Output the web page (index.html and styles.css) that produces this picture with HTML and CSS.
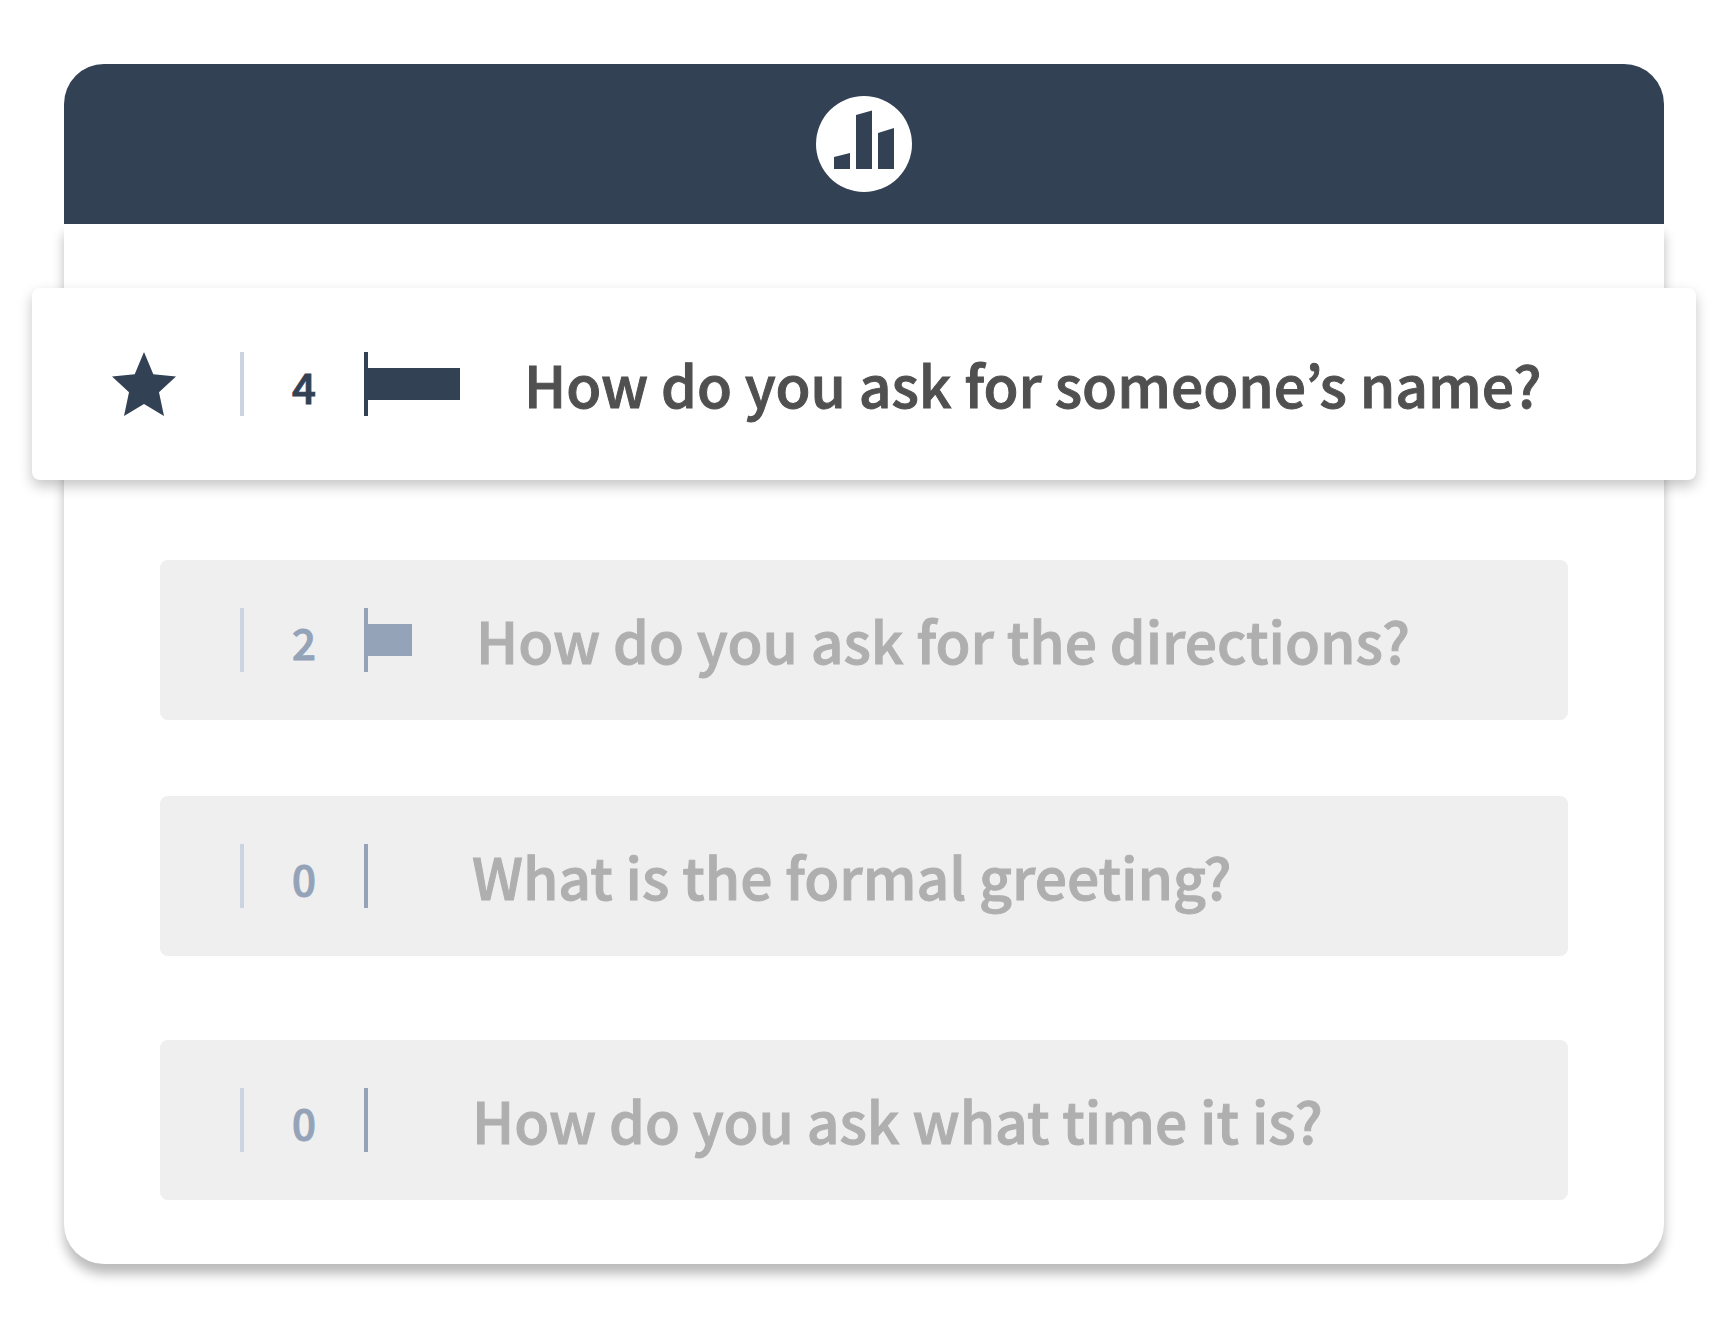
FILE: index.html
```html
<!DOCTYPE html>
<html lang="en">
<head>
  <meta charset="UTF-8">
  <meta name="viewport" content="width=device-width, initial-scale=1">
  <title>Questions</title>
  <link rel="stylesheet" href="styles.css">
</head>
<body>
  <main class="card">
    <header class="card-header">
      <svg class="logo" viewBox="0 0 96 96" aria-hidden="true">
        <circle cx="48" cy="48" r="48" fill="#fff"/>
        <path d="M18 61L34 57V73H18ZM40 19L56 14.5V73H40ZM62 37L78 32V73H62Z" fill="#334155"/>
      </svg>
    </header>

    <ol class="questions">
      <li class="question featured">
        <svg class="star" viewBox="0 0 64 64" aria-hidden="true">
          <path d="M32 0L41.3 22.3L64 24.6L47 40.3L52 64L32 52L12 64L17 40.3L0 24.6L22.7 22.3Z"/>
        </svg>
        <span class="votes">4</span>
        <span class="flag"><span class="bar" style="width: 92px"></span></span>
        <span class="text">How do you ask for someone’s name?</span>
      </li>
      <li class="question">
        <span class="votes">2</span>
        <span class="flag"><span class="bar" style="width: 44px"></span></span>
        <span class="text">How do you ask for the directions?</span>
      </li>
      <li class="question">
        <span class="votes">0</span>
        <span class="flag"></span>
        <span class="text">What is the formal greeting?</span>
      </li>
      <li class="question last">
        <span class="votes">0</span>
        <span class="flag"></span>
        <span class="text">How do you ask what time it is?</span>
      </li>
    </ol>
  </main>
</body>
</html>
```

FILE: styles.css
```css
:root {
  --navy: #334155;
  --muted: #94a3b8;
  --line: #cbd5e1;
  --row-bg: #efefef;
}

* {
  box-sizing: border-box;
}

body {
  margin: 0;
  padding: 64px;
  background: #fff;
  font-family: "Noto Sans CJK KR", "Open Sans", sans-serif;
  font-weight: 500;
  -webkit-text-stroke: 1px currentColor; /* semibold look */
}

.card-header {
  position: relative;
  display: flex;
  justify-content: center;
  padding: 32px;
  background: var(--navy);
  border-radius: 40px 40px 0 0;
}

.logo {
  width: 96px;
  height: 96px;
}

.questions {
  display: flex;
  flex-direction: column;
  gap: 76px;
  margin: 0;
  padding: 64px 96px;
  list-style: none;
  background: #fff;
  border-radius: 0 0 40px 40px;
  box-shadow: 0 10px 12px rgba(0, 0, 0, 0.27);
}

.question {
  display: flex;
  align-items: center;
  min-height: 160px;
  padding: 16px 32px 16px 80px;
  background: var(--row-bg);
  border-radius: 8px;
  color: #afafaf;
}

.featured {
  min-height: 192px;
  margin: 0 -128px 4px;
  background: #fff;
  box-shadow: 0 6px 14px rgba(0, 0, 0, 0.23);
  color: #505050;
}

.last {
  margin-top: 8px;
}

.star {
  width: 64px;
  height: 64px;
  margin-right: 64px;
  fill: var(--navy);
}

.votes {
  flex: none;
  width: 124px;
  height: 64px;
  padding-top: 2px;
  border-left: 4px solid var(--line);
  color: var(--muted);
  font-size: 42px;
  line-height: 64px;
  text-align: center;
}

.flag {
  display: flex;
  flex: none;
  align-items: center;
  min-width: 44px;
  height: 64px;
  margin-right: 64px;
  border-left: 4px solid var(--muted);
}

.bar {
  height: 32px;
  background: var(--muted);
}

.featured .votes {
  color: var(--navy);
}

.featured .flag {
  border-color: var(--navy);
}

.featured .bar {
  background: var(--navy);
}

.text {
  padding-bottom: 2px;
  font-size: 57px;
  line-height: 64px;
}
```
